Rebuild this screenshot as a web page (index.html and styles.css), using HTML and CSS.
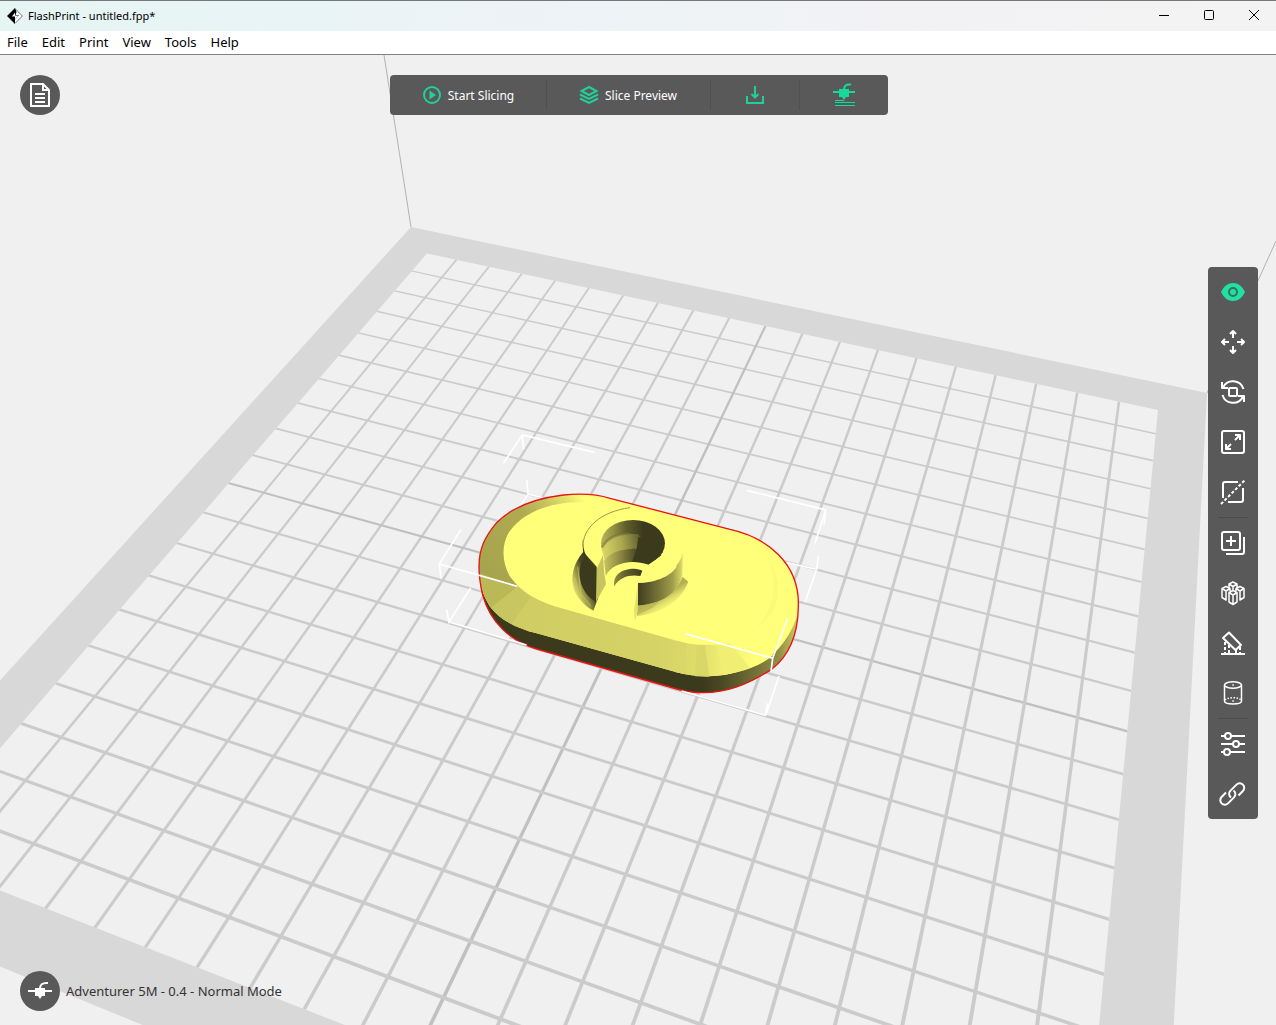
FILE: index.html
```html
<!DOCTYPE html>
<html lang="en">
<head>
<meta charset="utf-8">
<meta name="viewport" content="width=device-width, initial-scale=1">
<title>FlashPrint - untitled.fpp*</title>
<link rel="stylesheet" href="styles.css">
</head>
<body>
<header class="titlebar">
  <svg class="logo" viewBox="0 0 16 16" aria-hidden="true">
    <path d="M8 .6 15.400 8 8 15.400" fill="#fff" stroke="#777" stroke-width="1"/>
    <path d="M8 0 0 8l8 8v-4.500l4-4.500H8.500L9.500 4z" fill="#000"/>
    <path d="M8 4.500 5 8.500h3v3l3.500-4H8z" fill="#fff"/>
  </svg>
  <h1 class="title">FlashPrint - untitled.fpp*</h1>
  <div class="window-controls">
    <button class="window-button" type="button" aria-label="Minimize"><svg viewBox="0 0 12 12"><path d="M1 6.500h10"/></svg></button>
    <button class="window-button" type="button" aria-label="Maximize"><svg viewBox="0 0 12 12"><rect x="1.500" y="1.500" width="9" height="9" rx="1"/></svg></button>
    <button class="window-button" type="button" aria-label="Close"><svg viewBox="0 0 12 12"><path d="m1 1 10 10M11 1 1 11"/></svg></button>
  </div>
</header>

<nav class="menubar" aria-label="Main menu">
  <button class="menu" type="button">File</button>
  <button class="menu" type="button">Edit</button>
  <button class="menu" type="button">Print</button>
  <button class="menu" type="button">View</button>
  <button class="menu" type="button">Tools</button>
  <button class="menu" type="button">Help</button>
</nav>

<main class="stage">
  <svg class="scene" viewBox="0 55 1276 970" preserveAspectRatio="xMidYMid slice" role="img" aria-label="Model on the build plate">
    <defs>
      <path id="silhouette" d="M147 440C147 385 165 350 200 308 245 262 310 236 400 225 450 220 500 222 540 235L900 328C1010 352 1110 430 1105 560 1104 640 1080 705 1025 748 950 795 890 818 820 818 790 818 760 813 740 807L320 687C240 664 180 605 158 525 151 495 147 470 147 440z"/>
      <clipPath id="inside"><use href="#silhouette"/></clipPath>
      <linearGradient id="skirt" gradientUnits="userSpaceOnUse" x1="820" y1="0" x2="1105" y2="0">
        <stop offset="0" stop-color="#3c3a1c"/><stop offset=".2" stop-color="#4c4a24"/><stop offset=".5" stop-color="#6e6b34"/><stop offset=".8" stop-color="#938f46"/><stop offset="1" stop-color="#d0ce63"/>
      </linearGradient>
      <linearGradient id="chamfer" gradientUnits="userSpaceOnUse" x1="150" y1="0" x2="980" y2="0">
        <stop offset="0" stop-color="#b5b255"/><stop offset=".1" stop-color="#c4c25d"/><stop offset=".2" stop-color="#d0ce63"/><stop offset=".65" stop-color="#d5d366"/><stop offset=".78" stop-color="#dedc6a"/><stop offset=".88" stop-color="#f0ee72"/><stop offset="1" stop-color="#ffff7a"/>
      </linearGradient>
      <linearGradient id="chamferBack" gradientUnits="userSpaceOnUse" x1="180" y1="460" x2="450" y2="225">
        <stop offset="0" stop-color="#a7a44e"/><stop offset=".55" stop-color="#aeab52"/><stop offset=".75" stop-color="#c8c660"/><stop offset=".9" stop-color="#e6e46e"/><stop offset="1" stop-color="#ffff7a"/>
      </linearGradient>
      <linearGradient id="bore" gradientUnits="userSpaceOnUse" x1="512" y1="0" x2="640" y2="0">
        <stop offset="0" stop-color="#bab757"/><stop offset=".3" stop-color="#938f45"/><stop offset=".6" stop-color="#605d2d"/><stop offset="1" stop-color="#3c3a1c"/>
      </linearGradient>
      <linearGradient id="boreLow" gradientUnits="userSpaceOnUse" x1="520" y1="0" x2="630" y2="0">
        <stop offset="0" stop-color="#c9c75f"/><stop offset=".45" stop-color="#8d8943"/><stop offset="1" stop-color="#3c3a1c"/>
      </linearGradient>
      <linearGradient id="ledge" gradientUnits="userSpaceOnUse" x1="520" y1="400" x2="650" y2="380">
        <stop offset="0" stop-color="#d8d666"/><stop offset=".45" stop-color="#aaa750"/><stop offset="1" stop-color="#4c4a24"/>
      </linearGradient>
      <linearGradient id="hubWall" gradientUnits="userSpaceOnUse" x1="622" y1="0" x2="762" y2="0">
        <stop offset="0" stop-color="#3f3d1e"/><stop offset=".25" stop-color="#5d5a2c"/><stop offset=".5" stop-color="#7d7a3b"/><stop offset=".75" stop-color="#a09d4b"/><stop offset=".93" stop-color="#d2d064"/><stop offset="1" stop-color="#fafa77"/>
      </linearGradient>
      <linearGradient id="fillet" gradientUnits="userSpaceOnUse" x1="425" y1="500" x2="475" y2="480">
        <stop offset="0" stop-color="#ecea70"/><stop offset=".5" stop-color="#9b9849"/><stop offset="1" stop-color="#45431f"/>
      </linearGradient>
      <linearGradient id="filletRight" gradientUnits="userSpaceOnUse" x1="690" y1="530" x2="712" y2="568">
        <stop offset="0" stop-color="#b3b054"/><stop offset=".5" stop-color="#e2e06c"/><stop offset="1" stop-color="#ffff7a"/>
      </linearGradient>
    </defs>

    <!-- frame of the print volume and the plate -->
    <path d="M384 55 411 227M1276 241 1207 393" fill="none" stroke="#b2b2b2"/>
    <path d="M411 227 1207 393 1152 1439-189 889z" fill="#d8d8d8"/>
    <path d="M427 253.500 1158 410 1072 1308.500-92 854.700z" fill="#f0f0f0"/>
    <g id="grid"></g>

    <!-- model, drawn in a space three times finer than the scene -->
    <g transform="translate(430 420) scale(.33333)">
      <g class="bounds">
        <path d="M220 130 277 45 493 97M277 45l4 43M290 180l4 42 44 11M294 222l-22 36M950 211l237 59-5 45M1187 270l-32 100M1165 407l-5 41-90-20M1160 448l-35 99"/>
      </g>
      <g clip-path="url(#inside)">
        <use href="#silhouette" fill="#ffff7a"/>
        <path d="M140 440C149 490 155 520 180 560 210 600 260 625 320 640L740 757C800 773 860 773 920 757 1020 732 1080 670 1110 560V830H140z" fill="url(#skirt)"/>
        <path d="M147 430C149 490 155 520 180 560 210 600 260 625 320 640L740 757C800 773 860 773 920 757 965 745 1005 728 1030 705L860 674C810 676 780 673 740 662L400 566C320 545 270 513 240 470L190 440z" fill="url(#chamfer)"/>
        <path d="M140 470V200H510V227L470 246C350 242 270 285 235 340 213 380 217 430 240 470L265 500 205 525C180 500 160 468 140 465z" fill="url(#chamferBack)"/>
        <path d="M149 460 263 499 215 545 185 565C165 530 152 500 149 460z" fill="#bbb858"/>
        <path d="M185 562 263 499 300 533 245 611C220 598 200 582 185 562z" fill="#c8c660"/>
        <path d="M245 611 300 533 345 552 300 635z" fill="#cfcd63"/>
        <path d="M740 662 770 670 765 763 735 756zM800 675 825 676 838 770 795 769z" fill="#d9d768"/>
        <path d="M860 676 900 670 960 744 880 766z" fill="#f1ef73"/>
        <path d="M985 382C1050 440 1050 560 965 640L1010 600C1060 545 1060 450 985 382z" fill="#fafa77"/>
      </g>

      <!-- hub -->
      <path d="M460 395C430 430 420 470 432 510 448 545 475 565 492 573L505 540 500 440z" fill="url(#fillet)"/>
      <path d="M433 470l18 60M443 440l12 100M452 520l30 38" stroke="#c9c75f" stroke-width="3" fill="none" opacity=".7"/>
      <path d="M459 355C457 390 470 425 500 447L498 546C470 530 450 500 449 462 449 440 455 425 463 415 459 400 457 375 459 355z" fill="#3c3a1c"/>
      <path d="M459 380C458 325 510 275 600 263" fill="none" stroke="#9b9849" stroke-width="3"/>
      <path d="M622 556C690 545 740 520 757 470L775 485C750 550 690 580 621 588z" fill="url(#filletRight)"/>
      <path d="M624 488C700 486 752 440 760 392L757 465C742 520 700 550 622 557z" fill="url(#hubWall)"/>
      <path d="M621 557C650 555 670 550 690 543L665 565 621 584z" fill="#b8b556" opacity=".7"/>
      <ellipse cx="609" cy="370" rx="96" ry="70" fill="url(#bore)"/>
      <path d="M514 385C530 350 575 335 625 343L650 388C600 380 550 395 526 425z" fill="url(#ledge)"/>
      <path d="M516 382C532 352 565 338 600 342" fill="none" stroke="#77743a" stroke-width="8" opacity=".6"/>
      <path d="M522 422C545 392 590 382 650 390L695 405 655 434C610 420 560 425 528 470z" fill="url(#boreLow)"/>
      <path d="M625 350C665 370 680 400 700 395L655 434C635 427 620 426 605 428L620 388z" fill="#3c3a1c"/>
      <path d="M655 434C600 414 543 432 527 468L524 495 500 545 489 576 615 602 622 575 624 488C680 489 725 465 740 440L700 400C692 415 675 428 655 434z" fill="#ffff7a"/>
      <path d="M519 405 500 447 498 546 528 492 523 462z" fill="#c6c45e"/>
      <path d="M553 499C548 465 575 446 612 446 622 447 632 449 637 452L631 468C600 463 570 470 553 499z" fill="url(#bore)"/>
      <path d="M624 488 622 575 615 602 612 570z" fill="#e4e26d"/>

      <use href="#silhouette" class="outline"/>
      <g class="bounds">
        <path d="M93 328 28 432l5 43M28 432l234 67M122 504 57 606l-7-38M57 606l233 69M765 641l263 74 45-120M1028 715l-5 40M1047 768l-40 118 5-36M1007 886 755 813"/>
      </g>
    </g>
  </svg>

  <button class="round-button project" type="button" aria-label="Project">
    <svg viewBox="0 0 24 24"><path d="M3 1h12l6 6v16H3zM15 1v6h6M7 11h10M7 15h10M7 19h10"/></svg>
  </button>

  <div class="toolbar" role="toolbar" aria-label="Slicing">
    <button class="tool start" type="button">
      <svg class="tool-icon" viewBox="0 0 20 20"><circle cx="10" cy="10" r="8" fill="none" stroke="currentColor" stroke-width="2"/><path d="M7.500 5.500 14 10l-6.500 4.500z" fill="currentColor"/></svg>
      Start Slicing
    </button>
    <button class="tool preview" type="button">
      <svg class="tool-icon" viewBox="0 0 20 20" fill="none" stroke="currentColor" stroke-width="2"><path d="M10 2 17.500 6 10 10 2.500 6zM1 9.500l9 4.500 9-4.500M1 13.500l9 4.500 9-4.500" /></svg>
      Slice Preview
    </button>
    <button class="tool" type="button" aria-label="Export">
      <svg class="tool-icon" viewBox="0 0 20 20" fill="none" stroke="currentColor" stroke-width="2"><path d="M2 11v7h16v-7M10 1v11M6.500 9l3.500 3.500L13.500 9"/></svg>
    </button>
    <button class="tool" type="button" aria-label="Print">
      <svg class="print-icon" viewBox="0 0 24 24" fill="none" stroke="currentColor"><path d="M1 9h22" stroke-width="2"/><path d="M7 6h10v8h-3l-2 3-2-3H7z" fill="currentColor" stroke="none"/><path d="M12 7c0-4 2-6 7-5.500" stroke-width="2"/><path d="M3 17.500h9M3 19.500h20M3 22.500h20"/></svg>
    </button>
  </div>

  <div class="sidebar" role="toolbar" aria-label="Model tools">
    <button class="side-tool active" type="button" aria-label="View"><svg viewBox="0 0 24 24"><path d="M0 12C3 6 7 3 12 3s9 3 12 9c-3 6-7 9-12 9S3 18 0 12z" fill="currentColor" stroke="none"/><circle cx="12" cy="12" r="4" stroke="#36715c" stroke-width="2"/></svg></button>
    <button class="side-tool" type="button" aria-label="Move"><svg viewBox="0 0 24 24"><path d="M12 8V1M9 4l3-3 3 3M12 16v7M9 20l3 3 3-3M8 12H1M4 9l-3 3 3 3M16 12h7M20 9l3 3-3 3"/></svg></button>
    <button class="side-tool" type="button" aria-label="Rotate"><svg viewBox="0 0 24 24"><rect x="8" y="8" width="8" height="8" rx="1"/><path d="M2 7.500A11 11 0 0 1 22.500 9M22 16.500A11 11 0 0 1 1.500 15M1 2v6h6M23 22v-6h-6"/></svg></button>
    <button class="side-tool" type="button" aria-label="Scale"><svg viewBox="0 0 24 24"><rect x="1" y="1" width="22" height="22" rx="2"/><path d="M14 10l5-5M14 5h5v5M10 14l-5 5M5 14v5h5"/></svg></button>
    <button class="side-tool" type="button" aria-label="Cut"><svg viewBox="0 0 24 24"><path d="M17 2H4a2 2 0 0 0-2 2v14M7 22h13a2 2 0 0 0 2-2V8"/><path d="M0 24 24 0" stroke-dasharray="3 2"/></svg></button>
    <hr class="side-rule">
    <button class="side-tool" type="button" aria-label="Duplicate"><svg viewBox="0 0 24 24"><rect x="1" y="1" width="18" height="18" rx="2"/><path d="M10 5v10M5 10h10M5 23h16a2 2 0 0 0 2-2V6"/></svg></button>
    <button class="side-tool" type="button" aria-label="Arrange"><svg class="fine" viewBox="0 0 24 24"><path d="M12 1l4 2-4 2.500L8 3zM5 5.500l4 2-4 2.500-4-2.500zM19 5.500l4 2-4 2.500-4-2.500zM12 9.500l4 2-4 2.500-4-2.500zM1 7.500v9L5 19v-9M23 7.500v9L19 19v-9M8 11.500V21l4 2.500 4-2.500v-9.500M12 14v9.500M9 7.500V10M15 7.500V10M8 3v3.500M16 3v3.500M12 5.500v4"/></svg></button>
    <button class="side-tool" type="button" aria-label="Auto layout"><svg viewBox="0 0 24 24"><path d="M8 1.500 20 14l-5.500 5L2 7zM0 23h24"/><path d="M4 11v11M8 14v8M15 19v3M19 16v6" stroke-dasharray="3 2"/></svg></button>
    <button class="side-tool" type="button" aria-label="Shapes"><svg class="fine" viewBox="0 0 24 24"><ellipse cx="12" cy="4" rx="8.500" ry="3.200"/><path d="M3.500 4v16c0 4 17 4 17 0V4"/><path d="M4 19c2-3 14-3 16 0" stroke-dasharray="1.500 1.500"/><path d="M11.300 4h1.500M11.300 20h1.500"/></svg></button>
    <hr class="side-rule">
    <button class="side-tool" type="button" aria-label="Settings"><svg viewBox="0 0 24 24"><path d="M0 4h4M10 4h14M0 12h12M18 12h6M0 20h3M9 20h15"/><circle cx="7" cy="4" r="3"/><circle cx="15" cy="12" r="3"/><circle cx="6" cy="20" r="3"/></svg></button>
    <button class="side-tool" type="button" aria-label="Link"><svg viewBox="0 0 24 24"><path d="M10 15.500a4.500 4.500 0 0 1-.5-6.900l6-6a4.500 4.500 0 0 1 6.400 6.400L17.500 13.500"/><path d="M12.500 8.500a4.500 4.500 0 0 1 .5 6.900l-6 6a4.500 4.500 0 0 1-6.400-6.400L5 10.500"/></svg></button>
  </div>

  <div class="status">
    <button class="round-button" type="button" aria-label="Printer">
      <svg viewBox="0 0 24 24"><path d="M0 12h24"/><path d="M7 9h10v8h-3l-2 3-2-3H7z" fill="currentColor" stroke="none"/><path d="M12 10c0-4 2-6.500 8-6"/></svg>
    </button>
    <span class="printer">Adventurer 5M - 0.4 - Normal Mode</span>
  </div>
</main>
<script src="grid.js"></script>
</body>
</html>
```

FILE: styles.css
```css
* {
  box-sizing: border-box;
}

body {
  margin: 0;
  min-height: 100vh;
  display: flex;
  flex-direction: column;
  background: #f0f0f0;
  color: #000;
  font-family: "Noto Sans", "Open Sans", sans-serif;
  font-size: 12px;
}

button {
  border: 0;
  padding: 0;
  margin: 0;
  background: none;
  color: inherit;
  font: inherit;
}

svg {
  display: block;
}

.titlebar {
  display: flex;
  align-items: center;
  height: 31px;
  padding-left: 7px;
  box-shadow: inset 0 1px #77777a;
  background: linear-gradient(90deg, #e5f5f2, #eaf4f7 30%, #f2f2f5 70%, #f3f3f3);
}

.logo {
  width: 16px;
  height: 16px;
}

.title {
  flex: 1;
  margin: 0 0 0 5px;
  font-size: 11px;
  font-weight: 400;
}

.window-controls {
  display: flex;
  height: 30px;
  align-self: flex-start;
}

.window-button {
  display: grid;
  place-items: center;
  width: 45px;
}

.window-button svg {
  width: 12px;
  height: 12px;
  fill: none;
  stroke: #000;
}

.menubar {
  display: flex;
  gap: 14px;
  height: 24px;
  padding: 0 7px 2px;
  border-bottom: 1px solid #808086;
  background: #fff;
}

.stage {
  position: relative;
  flex: 1;
  display: grid;
  grid-template-columns: 1fr auto 1fr;
  grid-template-rows: auto 1fr auto;
  padding: 20px 18px 14px 20px;
  overflow: hidden;
}

/* backdrop that the floating controls lie over */
.scene {
  position: absolute;
  inset: 0;
  width: 100%;
  height: 100%;
}

.bounds {
  fill: none;
  stroke: #fff;
  stroke-width: 5;
}

.outline {
  fill: none;
  stroke: #e81414;
  stroke-width: 4;
}

.line {
  fill: #cbcbcb;
}

.line-center {
  fill: #c0c0c0;
}

.round-button,
.toolbar,
.sidebar,
.status {
  position: relative;
}

.round-button {
  display: grid;
  place-items: center;
  width: 40px;
  height: 40px;
  border-radius: 50%;
  background: #595959;
  color: #fff;
}

.round-button svg {
  width: 24px;
  height: 24px;
  fill: none;
  stroke: currentColor;
  stroke-width: 2;
}

.project {
  grid-area: 1 / 1;
}

.toolbar {
  grid-area: 1 / 2;
  display: flex;
  height: 40px;
  border-radius: 4px;
  background: #595959;
}

.tool {
  display: flex;
  align-items: center;
  justify-content: center;
  gap: 6px;
  width: 89px;
  color: #fff;
  font-size: 12px;
  white-space: nowrap;
}

.tool + .tool {
  background: linear-gradient(#4f4f4f, #4f4f4f) 0 50% / 1px 30px no-repeat;
}

.start {
  width: 156px;
}

.preview {
  width: 164px;
}

.tool-icon {
  width: 20px;
  height: 20px;
  color: #22cf99;
}

.print-icon {
  width: 24px;
  height: 24px;
  color: #14db9c;
}

.sidebar {
  grid-area: 1 / 3 / 4 / 4;
  align-self: center;
  justify-self: end;
  width: 50px;
  border-radius: 4px;
  background: #595959;
  color: #fff;
}

.side-tool {
  display: grid;
  place-items: center;
  width: 50px;
  height: 50px;
}

.side-tool svg {
  width: 24px;
  height: 24px;
  fill: none;
  stroke: currentColor;
  stroke-width: 2;
  stroke-linejoin: round;
  overflow: visible;
}

.side-tool .fine {
  stroke-width: 1.5;
}

.active {
  color: #22dfa4;
}

.side-rule {
  height: 1px;
  margin: 0 10px;
  border: 0;
  background: #4b4b4b;
}

.status {
  grid-area: 3 / 1 / 4 / 3;
  display: flex;
  align-items: center;
  gap: 6px;
  color: #333;
}

.menu,
.printer {
  font-size: 13px;
  white-space: nowrap;
}
```

FILE: grid.js
```js
// Projects the build plate's square grid onto its four corners on screen.
const corners = [[427, 253.5], [1158, 410], [1072, 1308.5], [-92, 854.7]];
const HALF = 9.92;   // half the plate, in grid cells
const THICK = 0.03;  // half the thickness of a line, in grid cells

const [[x0, y0], [x1, y1], [x2, y2], [x3, y3]] = corners;
const dx1 = x1 - x2, dx2 = x3 - x2, dx3 = x0 - x1 + x2 - x3;
const dy1 = y1 - y2, dy2 = y3 - y2, dy3 = y0 - y1 + y2 - y3;
const det = dx1 * dy2 - dx2 * dy1;
const g = (dx3 * dy2 - dx2 * dy3) / det;
const h = (dx1 * dy3 - dx3 * dy1) / det;

function project(cx, cy) {
  const u = (cx + HALF) / (2 * HALF), v = (cy + HALF) / (2 * HALF);
  const w = g * u + h * v + 1;
  const x = ((x1 - x0 + g * x1) * u + (x3 - x0 + h * x3) * v + x0) / w;
  const y = ((y1 - y0 + g * y1) * u + (y3 - y0 + h * y3) * v + y0) / w;
  return x.toFixed(2) + "," + y.toFixed(2);
}

function strip(points, center) {
  const shape = document.createElementNS("http://www.w3.org/2000/svg", "polygon");
  shape.setAttribute("points", points.map(p => project(p[0], p[1])).join(" "));
  shape.setAttribute("class", center ? "line-center" : "line");
  document.getElementById("grid").append(shape);
}

for (let i = -9; i <= 9; i++) {
  const a = i - THICK, b = i + THICK;
  strip([[a, -HALF], [b, -HALF], [b, HALF], [a, HALF]], i === 0);
  strip([[-HALF, a], [-HALF, b], [HALF, b], [HALF, a]], i === 0);
}
```
